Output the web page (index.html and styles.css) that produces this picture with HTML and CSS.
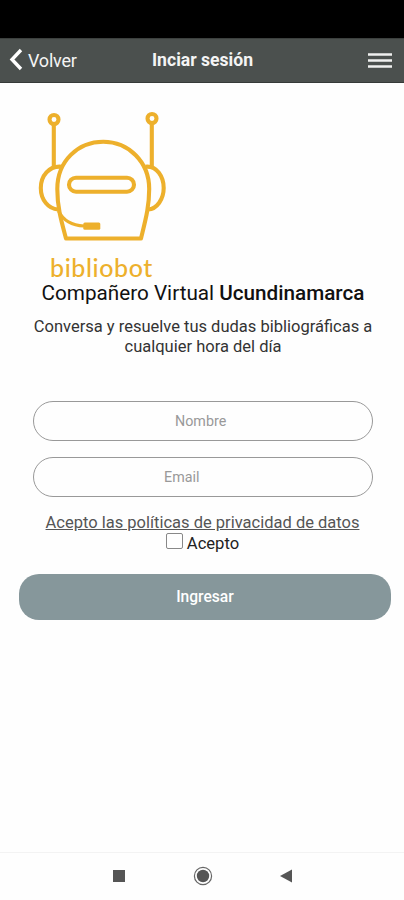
FILE: index.html
```html
<!DOCTYPE html>
<html lang="es">
<head>
<meta charset="utf-8">
<meta name="viewport" content="width=device-width, initial-scale=1">
<title>Inciar sesión</title>
<link rel="stylesheet" href="styles.css">
</head>
<body>
<div class="status"></div>
<header class="bar">
  <a class="back"><svg width="14" height="24" viewBox="0 0 14 24"><path d="M12 2 3 11.500l9 9.500"/></svg><span>Volver</span></a>
  <h1>Inciar sesión</h1>
  <svg class="menu" width="24" height="16" viewBox="0 0 24 16"><path d="M0 1.500h24M0 7.500h24M0 13.500h24"/></svg>
</header>
<main>
  <div class="logo">
    <svg width="130" height="136" viewBox="37 108 130 136">
      <circle cx="54" cy="119.500" r="4.500"/>
      <circle cx="152" cy="118.500" r="4.500"/>
      <path d="M53.800 124.500v42M151.800 123.500v43"/>
      <path d="M66 238.500C61 220 57.300 207 57.300 189 57.300 161 78 141.800 103.300 141.800S149.200 162 149.200 189C149.200 207 145.500 220 141 238.500Z"/>
      <path d="M61.500 166.700C49 165.500 40.800 176 40.800 188S48.500 209 58 209.500M145.500 166.700C157 165.500 163.700 177 163.700 188S157 209 148 209.500"/>
      <rect x="69" y="177.700" width="65" height="14" rx="7"/>
      <path class="thin" d="M58.500 211C63 220 71 225.500 84 226"/>
      <rect class="mic" x="83.300" y="222.400" width="17" height="7.400" rx="1.500"/>
    </svg>
    <div class="brand">bibliobot</div>
  </div>
  <h2>Compañero Virtual <b>Ucundinamarca</b></h2>
  <p class="intro">Conversa y resuelve tus dudas bibliográficas a<br>cualquier hora del día</p>
  <form>
    <div class="field"><span class="nombre">Nombre</span></div>
    <div class="field"><span class="email">Email</span></div>
    <a class="policy">Acepto las políticas de privacidad de datos</a>
    <label class="accept"><i class="box"></i><span>Acepto</span></label>
    <button type="button">Ingresar</button>
  </form>
</main>
<nav>
  <svg width="14" height="14" viewBox="0 0 14 14"><path d="M1 1h12v12H1z"/></svg>
  <svg width="20" height="20" viewBox="0 0 20 20"><circle cx="10" cy="10" r="6.200"/><circle class="ring" cx="10" cy="10" r="8.600"/></svg>
  <svg width="14" height="14" viewBox="0 0 14 14"><path d="M0 7 12 .5v13z"/></svg>
</nav>
</body>
</html>
```
FILE: styles.css
```css
* { box-sizing: border-box; }
body {
  margin: 0;
  height: 900px;
  display: flex;
  flex-direction: column;
  overflow: hidden;
  background: #fefefe;
  font-family: Roboto, sans-serif;
  color: #111;
}
svg { display: block; }
.status { height: 38px; background: #000; }
.bar {
  height: 45px;
  padding: 0 12px 0 9px;
  display: grid;
  grid-template-columns: 1fr auto 1fr;
  align-items: center;
  background: #4b504e;
  border-top: 1px solid #3c403e;
  border-bottom: 1px solid #363a38;
  color: #f4f4f4;
}
.back { display: flex; align-items: center; gap: 5px; margin-bottom: 1px; font-size: 18px; letter-spacing: -.2px; }
.back path { fill: none; stroke: #fff; stroke-width: 3.4; }
h1 { margin: 0 0 1px 4px; font-size: 17.6px; font-weight: 700; }
.menu { justify-self: end; }
.menu path { stroke: #f0f0f0; stroke-width: 2.4; }
main { flex: 1; padding-top: 25px; }
.logo { width: 130px; margin-left: 37px; }
.logo svg { fill: none; stroke: #edb02c; stroke-width: 4.1; stroke-linejoin: round; }
.logo .thin { stroke-width: 3; }
.logo .mic { fill: #edb02c; stroke: none; }
.brand {
  height: 37px;
  padding: 9px 0 0 13px;
  font: 500 25px/28px Lato, sans-serif;
  letter-spacing: .6px;
  color: #edb02c;
}
h2 { margin: 0 0 0 2px; height: 24px; text-align: center; font-size: 20.7px; line-height: 25px; font-weight: 400; white-space: nowrap; }
h2 b { font-weight: 500; }
.intro { margin: 12px 0 0 2px; text-align: center; font-size: 16.5px; line-height: 20px; color: #333; white-space: nowrap; }
form { padding: 44px 13px 0 19px; }
.field {
  width: 340px;
  height: 40px;
  margin: 0 0 16px 14px;
  border: 1px solid #999;
  border-radius: 20px;
  font-size: 14.3px;
  line-height: 38px;
  color: #999;
}
.field span { display: inline-block; margin-left: 141px; }
.field .email { margin-left: 130px; }
.policy { display: block; margin-right: 5px; height: 20px; text-align: center; font-size: 16.5px; line-height: 20px; color: #555; text-decoration: underline; white-space: nowrap; }
.accept { display: flex; justify-content: center; gap: 4px; height: 20px; margin-right: 5px; font-size: 16.6px; line-height: 22px; color: #222; }
.box { width: 17px; height: 16px; border: 1px solid #888; border-radius: 2px; }
button {
  display: block;
  width: 372px;
  height: 46px;
  margin-top: 21px;
  border: 0;
  border-radius: 20px;
  background: #86979b;
  color: #fff;
  font: 500 15.6px/46px Roboto, sans-serif;
  padding: 0;
}
nav {
  height: 48px;
  border-top: 1px solid #f3f3f3;
  padding: 0 0 2px 1px;
  display: flex;
  justify-content: center;
  align-items: center;
  gap: 67px;
  fill: #555;
}
.ring { fill: none; stroke: #666; stroke-width: 1.2; }
```
